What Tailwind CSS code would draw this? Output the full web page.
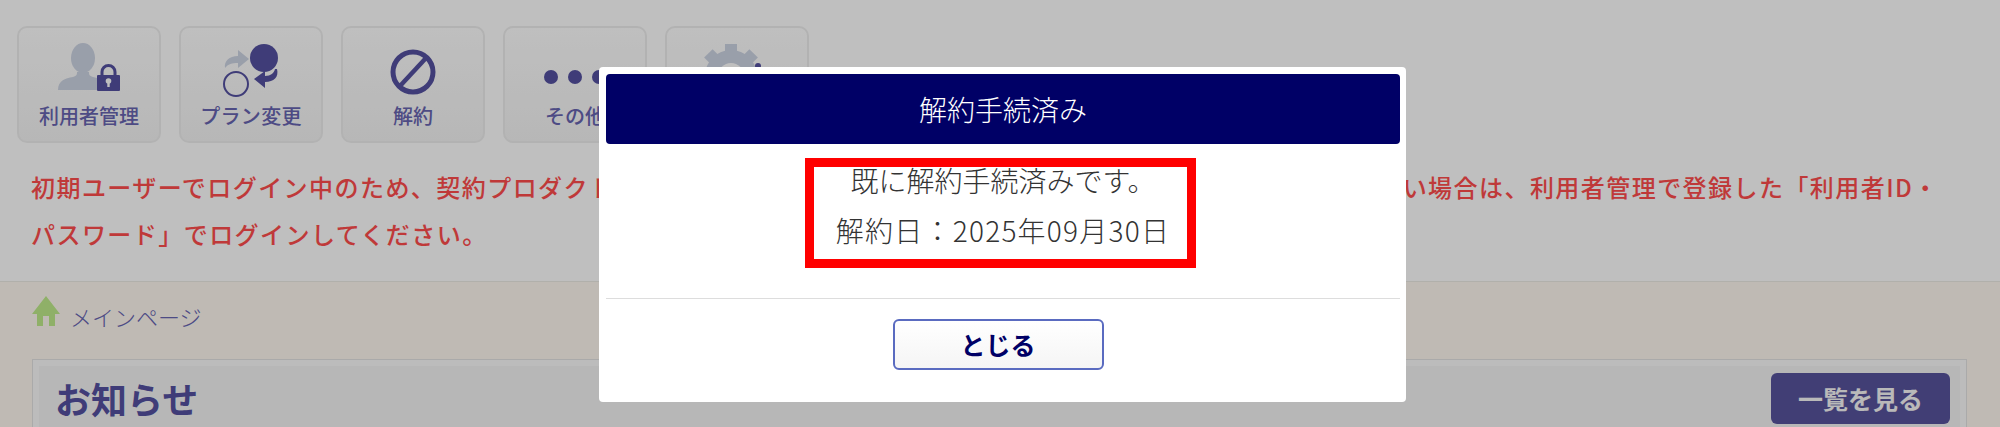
<!DOCTYPE html>
<html lang="ja">
<head>
  <meta charset="UTF-8" />
  <title>解約手続済み</title>
  <script src="https://cdn.jsdelivr.net/npm/@tailwindcss/browser@4"></script>
</head>
<body class="bg-white font-['Noto_Sans_CJK_JP','Noto_Sans',sans-serif]">
<div class="relative h-[427px] w-[2000px] overflow-hidden">

  <!-- page behind the dialog -->
  <div class="h-[282px] border-b border-[#edebe5] bg-white pl-[17px] pt-[26px]">
    <div class="flex gap-[18px]">
      <a class="flex h-[117px] w-[144px] flex-col items-center rounded-[10px] border-2 border-[#eeeeee] bg-gradient-to-b from-white to-[#f5f5f5] pt-[10px] text-[#6764b1]">
        <svg width="80" height="64" viewBox="0 0 80 64">
          <ellipse cx="34" cy="20" rx="12" ry="15" fill="#cdd4e3" />
          <path d="M9 52c0-9 7-12 15-13 4-1 4-3 4-5h12c0 2 0 4 4 5l4 1v12z" fill="#cdd4e3" />
          <rect x="48" y="37" width="23" height="16" rx="1" fill="#5451a0" />
          <path d="M53 38v-4a6.500 6.500 0 0 1 13 0v4" fill="none" stroke="#5451a0" stroke-width="3" />
          <circle cx="59.500" cy="43" r="2.800" fill="#fff" />
          <rect x="58.300" y="44" width="2.400" height="5" fill="#fff" />
        </svg>
        <span class="text-[20px] leading-[28px] font-medium">利用者管理</span>
      </a>
      <a class="flex h-[117px] w-[144px] flex-col items-center rounded-[10px] border-2 border-[#eeeeee] bg-gradient-to-b from-white to-[#f5f5f5] pt-[10px] text-[#6764b1]">
        <svg width="80" height="64" viewBox="0 0 80 64">
          <path d="M14 30c-1-7 4-12 13-12v-6l11 9-11 9v-5c-6 0-10 1-13 5z" fill="#cdd4e3" />
          <circle cx="53" cy="20" r="14" fill="#5451a0" />
          <circle cx="25" cy="46" r="12" fill="none" stroke="#5451a0" stroke-width="2" />
          <path d="M66 31c2 8-3 13-12 13v6l-11-9 11-8v5c6 0 9-3 10-7z" fill="#5451a0" />
        </svg>
        <span class="text-[20px] leading-[28px] font-medium tracking-[0.3px]">プラン変更</span>
      </a>
      <a class="flex h-[117px] w-[144px] flex-col items-center rounded-[10px] border-2 border-[#eeeeee] bg-gradient-to-b from-white to-[#f5f5f5] pt-[10px] text-[#6764b1]">
        <svg width="80" height="64" viewBox="0 0 80 64">
          <circle cx="40" cy="34" r="20" fill="none" stroke="#5451a0" stroke-width="5" />
          <path d="M27 48l26-28" stroke="#5451a0" stroke-width="4.500" />
        </svg>
        <span class="text-[20px] leading-[28px] font-medium">解約</span>
      </a>
      <a class="flex h-[117px] w-[144px] flex-col items-center rounded-[10px] border-2 border-[#eeeeee] bg-gradient-to-b from-white to-[#f5f5f5] pt-[10px] text-[#6764b1]">
        <svg width="80" height="64" viewBox="0 0 80 64">
          <circle cx="16" cy="39" r="7" fill="#5451a0" />
          <circle cx="40" cy="39" r="7" fill="#5451a0" />
          <circle cx="64" cy="39" r="7" fill="#5451a0" />
        </svg>
        <span class="text-[20px] leading-[28px] font-medium">その他</span>
      </a>
      <a class="flex h-[117px] w-[144px] flex-col items-center rounded-[10px] border-2 border-[#eeeeee] bg-gradient-to-b from-white to-[#f5f5f5] pt-[10px] text-[#6764b1]">
        <svg width="80" height="64" viewBox="0 0 80 64">
          <g fill="#cdd4e3">
            <circle cx="34" cy="38" r="26" />
            <rect x="28" y="6" width="12" height="64" />
            <rect x="2" y="32" width="64" height="12" />
            <rect x="28" y="6" width="12" height="64" transform="rotate(45 34 38)" />
            <rect x="28" y="6" width="12" height="64" transform="rotate(-45 34 38)" />
          </g>
          <circle cx="34" cy="38" r="13" fill="#ffffff" />
          <circle cx="61" cy="28" r="3" fill="#5451a0" />
        </svg>
        <span class="text-[20px] leading-[28px] font-medium">設定</span>
      </a>
    </div>
    <p class="mt-[20px] whitespace-nowrap pl-[14px] text-[24px] leading-[47px] font-medium tracking-[1.45px] text-[#ff4d4d]">初期ユーザーでログイン中のため、契約プロダクトの利用者設定や各種類の閲覧ができません。各機能をご利用になりたい場合は、利用者管理で登録した「利用者ID・<br />パスワード」でログインしてください。</p>
  </div>

  <div class="h-[145px] bg-[#fff9f1] pl-[32px]">
    <div class="flex items-start gap-[10px] pt-[14px] text-[#6764b1]">
      <svg width="28" height="30" viewBox="0 0 28 30">
        <path d="M14 0L28 18h-5v12h-6V20h-6v10H5V18H0z" fill="#bfeb8b" />
      </svg>
      <span class="mt-[5px] text-[22px] leading-[30px] font-light">メインページ</span>
    </div>
    <div class="mt-[28px] h-[70px] w-[1935px] border border-[#e3e3e3] bg-[#fbfbfb] px-[6px] pt-[6px]">
      <div class="flex h-[64px] items-start justify-between bg-[#f5f5f5] pl-[16px] pr-[10px] pt-[7px]">
        <h2 class="text-[36px] leading-[50px] font-bold text-[#5451a0]">お知らせ</h2>
        <a class="flex h-[51px] w-[179px] items-center justify-center rounded-[6px] bg-[#57539d] text-[25px] font-bold text-[#f7f7f7]">一覧を見る</a>
      </div>
    </div>
  </div>

  <!-- scrim -->
  <div class="absolute inset-0 bg-black/25"></div>

  <!-- dialog -->
  <div class="absolute left-[599px] top-[67px] h-[335px] w-[807px] rounded-[4px] bg-white pl-[7px] pr-[6px] pt-[7px]">
    <div class="flex h-[70px] items-center justify-center rounded-[4px] bg-[#000066] text-[28px] font-light text-white">解約手続済み</div>
    <div class="h-[155px] border-b border-[#dddddd] pt-[11px] text-center text-[28px] font-light text-[#333333]">
      <p class="leading-[50px]">既に解約手続済みです。</p>
      <p class="leading-[50px] tracking-[1.25px]">解約日：2025年09月30日</p>
    </div>
    <div class="flex justify-center pt-[20px]">
      <button class="mr-[10px] h-[51px] w-[211px] rounded-[6px] border-2 border-[#5a6bc0] bg-gradient-to-b from-white to-[#f5f5f5] text-[25px] font-bold text-[#000066]">とじる</button>
    </div>
  </div>

  <!-- red annotation box -->
  <div class="absolute left-[805px] top-[158px] h-[110px] w-[391px] border-[9px] border-[#ff0000]"></div>
</div>
</body>
</html>
